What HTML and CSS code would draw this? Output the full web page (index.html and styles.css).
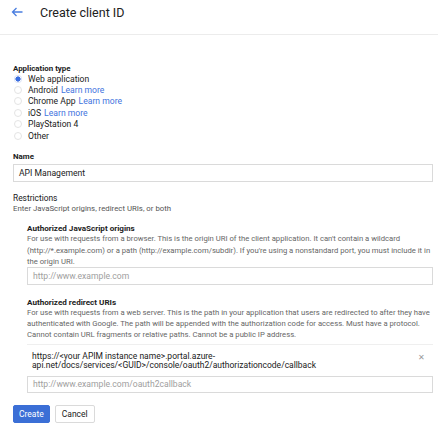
FILE: index.html
```html
<!DOCTYPE html>
<html>
<head>
<meta charset="utf-8">
<link rel="stylesheet" href="styles.css">
</head>
<body>
<header class="topbar">
  <svg class="back" width="12" height="10" viewBox="0 0 12 10"><path d="M11.5 5H1.5M5.5 1L1.5 5L5.5 9" fill="none" stroke="#4a7ee0" stroke-width="1.3"/></svg>
  <h1 class="title">Create client ID</h1>
</header>
<main class="form">
  <section class="apptype">
    <div class="label">Application type</div>
    <ul class="radios">
      <li class="radio"><span class="dot checked"></span>Web application</li>
      <li class="radio"><span class="dot"></span>Android <a class="link">Learn more</a></li>
      <li class="radio"><span class="dot"></span>Chrome App <a class="link">Learn more</a></li>
      <li class="radio"><span class="dot"></span>iOS <a class="link">Learn more</a></li>
      <li class="radio"><span class="dot"></span>PlayStation 4</li>
      <li class="radio"><span class="dot"></span>Other</li>
    </ul>
  </section>
  <section class="name">
    <div class="label">Name</div>
    <div class="input">API Management</div>
  </section>
  <section class="restrictions">
    <div class="heading">Restrictions</div>
    <div class="hint">Enter JavaScript origins, redirect URIs, or both</div>
    <div class="sub origins">
      <div class="label">Authorized JavaScript origins</div>
      <p class="desc">For use with requests from a browser. This is the origin URI of the client application. It can't contain a wildcard<br>(http://*.example.com) or a path (http://example.com/subdir). If you're using a nonstandard port, you must include it in<br>the origin URI.</p>
      <div class="input placeholder">http://www.example.com</div>
    </div>
    <div class="sub redirects">
      <div class="label">Authorized redirect URIs</div>
      <p class="desc">For use with requests from a web server. This is the path in your application that users are redirected to after they have<br>authenticated with Google. The path will be appended with the authorization code for access. Must have a protocol.<br>Cannot contain URL fragments or relative paths. Cannot be a public IP address.</p>
      <div class="uri">
        <span class="uri-text">https://&lt;your APIM instance name&gt;.portal.azure-<br>api.net/docs/services/&lt;GUID&gt;/console/oauth2/authorizationcode/callback</span>
        <span class="remove">✕</span>
      </div>
      <div class="input placeholder">http://www.example.com/oauth2callback</div>
    </div>
  </section>
  <div class="actions">
    <button class="btn primary">Create</button>
    <button class="btn">Cancel</button>
  </div>
</main>
</body>
</html>
```
FILE: styles.css
```css
* { box-sizing: border-box; }
html, body { margin: 0; padding: 0; background: #fff; }
body {
  font-family: Roboto, "Liberation Sans", Arial, sans-serif;
  color: #212121;
  width: 438px;
  height: 431px;
  overflow: hidden;
}
.topbar {
  display: flex;
  align-items: center;
  height: 35px;
  padding: 0 0 10px 11px;
  border-bottom: 1px solid #ececec;
}
.back { flex: none; }
.title {
  margin: 0 0 0 17px;
  font-size: 12.5px;
  font-weight: 400;
  color: #212121;
}
.form { padding: 29px 5px 0 13px; }
.label { font-size: 7.9px; font-weight: 700; line-height: 10px; color: #212121; }
.radios { list-style: none; margin: -1px 0 0; padding: 0; }
.radio {
  display: flex;
  align-items: center;
  height: 11.4px;
  font-size: 8.6px;
  color: #212121;
}
.dot {
  width: 8px; height: 8px;
  border-radius: 50%;
  border: 1px solid #e4e4e4;
  margin: 0 6px 0 1px;
  flex: none;
}
.dot.checked {
  border: none;
  background: radial-gradient(circle, #3b6ee0 0 2.4px, #fff 2.8px);
  box-shadow: inset 0 0 0 1px #dfe6f7;
}
.link { color: #3f73de; margin-left: 3px; text-decoration: none; }
.name { margin-top: 10px; }
.name .label { line-height: 12px; }
.input {
  height: 18px;
  border: 1px solid #dadada;
  font-size: 8.6px;
  line-height: 16px;
  padding: 0 5px;
  color: #212121;
  margin-top: 1px;
}
.input.placeholder { color: #9e9e9e; }
.restrictions { margin-top: 11px; }
.heading { font-size: 8.4px; line-height: 10px; color: #212121; }
.hint { font-size: 7.8px; line-height: 12px; color: #555; }
.sub { padding-left: 14px; }
.origins { margin-top: 8px; }
.sub .label { font-size: 8.1px; line-height: 10px; }
.desc {
  margin: 0;
  font-size: 7.7px;
  line-height: 11.2px;
  color: #666;
  white-space: nowrap;
}
.origins .input { margin-top: 0; }
.redirects { margin-top: 12px; }
.uri {
  display: flex;
  justify-content: space-between;
  align-items: flex-start;
  border-top: 1px solid #efefef;
  margin-top: 3px;
  padding: 7px 8px 5px 5px;
}
.uri-text { font-size: 8.5px; line-height: 9.5px; color: #212121; }
.remove { font-size: 8px; color: #9a9a9a; margin-top: 1px; }
.redirects .input { margin-top: 0; height: 17px; line-height: 15px; }
.actions { display: flex; gap: 5px; margin-top: 12px; }
.btn {
  font-family: inherit;
  font-size: 8.5px;
  height: 18px;
  padding: 0 6px;
  border: 1px solid #dadada;
  background: #fff;
  color: #212121;
  border-radius: 2px;
}
.btn.primary { background: #3b6fd6; border-color: #3b6fd6; color: #fff; padding: 0 5px; }
```
